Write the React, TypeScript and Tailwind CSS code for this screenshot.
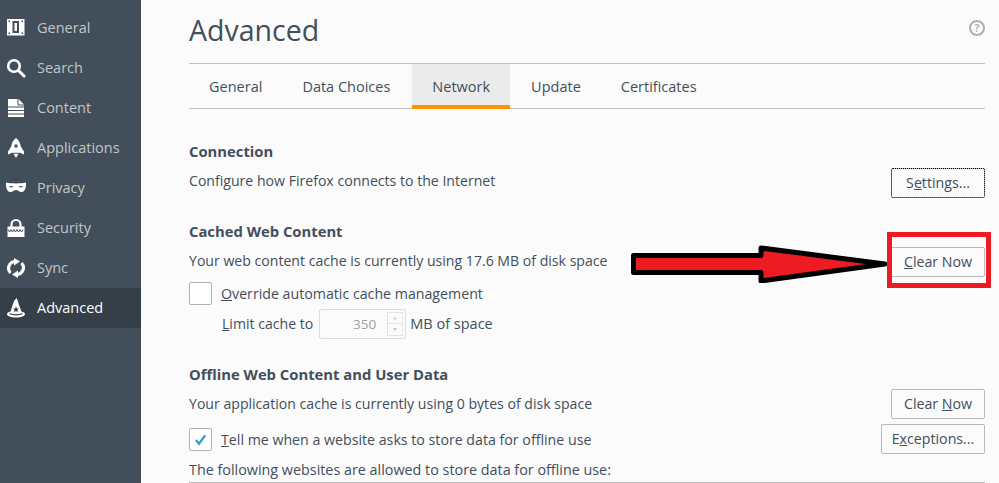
import React from 'react';

const font = { fontFamily: '"Open Sans", "Noto Sans", sans-serif' };

const iconClass = 'w-5 h-5 text-white shrink-0';

function GeneralIcon() {
  return (
    <svg viewBox="0 0 20 20" className={iconClass}>
      <path fill="currentColor" fillRule="evenodd" d="M1 1h17.5v16.5H1zM6.5 3v12h6.5V3zM8.5 5h2.5v8H8.5z" />
      <rect x="2.5" y="2.5" width="1.5" height="1.5" fill="#424f5a" />
      <rect x="15.5" y="2.5" width="1.5" height="1.5" fill="#424f5a" />
      <rect x="2.5" y="14.5" width="1.5" height="1.5" fill="#424f5a" />
      <rect x="15.5" y="14.5" width="1.5" height="1.5" fill="#424f5a" />
    </svg>
  );
}

function SearchIcon() {
  return (
    <svg viewBox="0 0 20 20" className={iconClass}>
      <circle cx="8" cy="8" r="5.8" fill="none" stroke="currentColor" strokeWidth="2.6" />
      <path d="M12.5 12.5L18 18" stroke="currentColor" strokeWidth="3" strokeLinecap="round" />
    </svg>
  );
}

function ContentIcon() {
  return (
    <svg viewBox="0 0 20 20" className={iconClass}>
      <path fill="currentColor" d="M2 1h10.5L18 6.5V19H2z" />
      <path d="M12 1v6h6" fill="none" stroke="#424f5a" strokeWidth="1" />
      <path d="M2 9h16M2 12.5h16M2 16h16" stroke="#424f5a" strokeWidth="1.2" />
    </svg>
  );
}

function RocketIcon() {
  return (
    <svg viewBox="0 0 20 20" className={iconClass}>
      <path fill="currentColor" d="M10 0c2.800 2 4.400 5 4.800 8.500L18 13.500 18 16.500l-4-1.700H6L2 16.500 2 13.500 5.200 8.500C5.600 5 7.200 2 10 0z" />
      <circle cx="10" cy="8" r="1.700" fill="#424f5a" />
      <path fill="currentColor" d="M7.500 15.800h5L10 20z" />
    </svg>
  );
}

function MaskIcon() {
  return (
    <svg viewBox="0 0 20 20" className={iconClass}>
      <path
        fill="currentColor"
        fillRule="evenodd"
        d="M0 4.500c3 1 6.500.500 10 1 3.500-.500 7 0 10-1 .200 4.500-.800 9-4 9.500-2.500.300-4-2-6-2s-3.500 2.300-6 2c-3.200-.500-4.200-5-4-9.500zM3 8.500c1 1.300 3.500 1.300 4.500.300C6 7.800 4.300 7.800 3 8.500zM17 8.500c-1 1.300-3.500 1.300-4.500.300 1.500-1 3.200-1 4.500-.300z"
      />
    </svg>
  );
}

function LockIcon() {
  return (
    <svg viewBox="0 0 20 20" className={iconClass}>
      <path d="M5.500 9V6.500a4.500 4.500 0 0 1 9 0V9" fill="none" stroke="currentColor" strokeWidth="2.200" />
      <path fill="currentColor" d="M1.500 8.500h17V19h-17z" />
      <path d="M2 11.500l1.500 2.500 1.500-2.500 1.500 2.500 1.500-2.500 1.500 2.500 1.500-2.500 1.500 2.500 1.500-2.500 1.500 2.500 1.500-2.500" fill="none" stroke="#424f5a" strokeWidth="1" />
    </svg>
  );
}

function SyncIcon() {
  return (
    <svg viewBox="0 0 20 20" className={iconClass}>
      <path d="M9.500 3.500A6.800 6.800 0 0 0 4.500 15" fill="none" stroke="currentColor" strokeWidth="3.200" />
      <path fill="currentColor" d="M8 0l6 3.500-6 4z" />
      <path d="M10.500 16.500A6.800 6.800 0 0 0 15.500 5" fill="none" stroke="currentColor" strokeWidth="3.200" />
      <path fill="currentColor" d="M12 20l-6-3.500 6-4z" />
    </svg>
  );
}

function WizardIcon() {
  return (
    <svg viewBox="0 0 20 20" className={iconClass}>
      <path fill="currentColor" d="M10.500 0L8 3 4.500 13.500c-2 .500-3.500 1.500-3.500 2.500C1 18 5 19.500 10 19.500S19 18 19 16c0-1-1.500-2-3.500-2.500L12.800 6.500c-.300-2-1.300-4.500-2.300-6.500z" />
      <path d="M3.500 15.500c3.500 1.800 9.500 1.800 13 0" fill="none" stroke="#343f48" strokeWidth="1.200" />
      <path fill="#343f48" d="M10 8.500l.900 2 2.100.200-1.600 1.400.500 2.100-1.900-1.100-1.900 1.100.500-2.100L7 10.700l2.100-.200z" />
    </svg>
  );
}

const nav = [
  { label: 'General', icon: <GeneralIcon /> },
  { label: 'Search', icon: <SearchIcon /> },
  { label: 'Content', icon: <ContentIcon /> },
  { label: 'Applications', icon: <RocketIcon /> },
  { label: 'Privacy', icon: <MaskIcon /> },
  { label: 'Security', icon: <LockIcon /> },
  { label: 'Sync', icon: <SyncIcon /> },
  { label: 'Advanced', icon: <WizardIcon />, active: true },
];

const tabs = ['General', 'Data Choices', 'Network', 'Update', 'Certificates'];

function Btn({ children, className = '' }: { children: React.ReactNode; className?: string }) {
  return (
    <button className={`h-[30px] border border-[#b9b9b9] rounded-[2px] bg-[#fbfbfb] text-[14.2px] text-[#424f5a] ${className}`}>
      {children}
    </button>
  );
}

function Checkbox({ checked }: { checked?: boolean }) {
  return (
    <span className="w-[23px] h-[23px] border border-[#b1b1b1] rounded-[2px] bg-white flex items-center justify-center shrink-0">
      {checked && (
        <svg viewBox="0 0 14 14" className="w-[13px] h-[13px]">
          <path d="M2 7.500L5.500 11.500L12 2.500" fill="none" stroke="#2f9bd3" strokeWidth="2.400" />
        </svg>
      )}
    </span>
  );
}

export default function App() {
  return (
    <div className="w-[999px] h-[483px] flex overflow-hidden bg-[#fbfbfb] text-[14.1px] text-[#424f5a] relative" style={font}>
      <aside className="w-[141px] shrink-0 bg-[#424f5a] pt-2 text-[14.5px]">
        {nav.map((n) => (
          <div key={n.label} className={`h-10 pl-[6px] pb-px flex items-center gap-[11px] ${n.active ? 'bg-[#343f48] text-white' : 'text-[#c1c5c9]'}`}>
            {n.icon}
            <span>{n.label}</span>
          </div>
        ))}
      </aside>

      <main className="flex-1 pl-12 pr-[14px] min-w-0">
        <div className="h-[63px] flex justify-between">
          <h1 className="text-[28.500px] leading-none pt-[16px]">Advanced</h1>
          <span className="mt-[20px] w-4 h-4 rounded-full border-2 border-[#aeaeae] text-[#aeaeae] text-[10px] font-bold flex items-center justify-center">?</span>
        </div>

        <div className="h-[46px] border-y border-[#c1c1c1] flex text-[14.500px]">
          {tabs.map((t) => (
            <div
              key={t}
              className={`flex items-center ${t === 'Network' ? 'pl-5 pr-5 bg-[#ebebeb] border-b-4 border-[#ff9400] pt-1 -mb-px' : 'pt-[2px]'} ${t === 'Data Choices' ? 'pl-5 pr-[22px]' : ''} ${t === 'General' || t === 'Certificates' ? 'pl-5 pr-5' : ''} ${t === 'Update' ? 'pl-[21px] pr-5' : ''}`}
            >
              {t}
            </div>
          ))}
        </div>

        <section className="pt-[32px]">
          <h2 className="font-bold leading-5 text-[14.800px]">Connection</h2>
          <div className="flex items-center justify-between h-[30px] mt-[5px]">
            <p>Configure how Firefox connects to the Internet</p>
            <Btn className="w-[94px] outline-1 outline-dotted outline-black -outline-offset-1 mt-[4px]">
              S<span className="underline">e</span>ttings...
            </Btn>
          </div>
        </section>

        <section className="pt-[25px]">
          <h2 className="font-bold leading-5 text-[14.800px]">Cached Web Content</h2>
          <div className="flex items-center justify-between h-[30px] mt-[5px]">
            <p>Your web content cache is currently using 17.6 MB of disk space</p>
            <Btn className="w-[94px] mt-[2px]">
              <span className="underline">C</span>lear Now
            </Btn>
          </div>
          <div className="flex items-center gap-[9px] h-6 mt-[5px] text-[14.200px]">
            <Checkbox />
            <span className="pt-px"><span className="underline">O</span>verride automatic cache management</span>
          </div>
          <div className="flex items-center h-[30px] ml-[33px] mt-[4px]">
            <span><span className="underline">L</span>imit cache to</span>
            <div className="w-[87px] h-[30px] ml-[6px] border border-[#dcdcdc] rounded-[2px] flex items-center justify-end pr-[2px] text-[#9aa1a7] text-[13.500px]">
              <span className="mr-[11px]">350</span>
              <div className="flex flex-col w-4 h-6 border border-[#e4e4e4] text-[#c4c4c4]">
                <svg viewBox="0 0 14 11" className="h-[11px] border-b border-[#e4e4e4]"><path d="M5 7l2-3 2 3z" fill="currentColor" /></svg>
                <svg viewBox="0 0 14 11" className="h-[11px]"><path d="M5 4l2 3 2-3z" fill="currentColor" /></svg>
              </div>
            </div>
            <span className="ml-[4px] text-[14.500px]">MB of space</span>
          </div>
        </section>

        <section className="pt-[25px]">
          <h2 className="font-bold leading-5 text-[14.800px]">Offline Web Content and User Data</h2>
          <div className="flex items-center justify-between h-[30px] mt-[5px]">
            <p>Your application cache is currently using 0 bytes of disk space</p>
            <Btn className="w-[94px]">
              Clear <span className="underline">N</span>ow
            </Btn>
          </div>
          <div className="flex items-center justify-between h-[30px] mt-[5px]">
            <div className="flex items-center gap-[9px]">
              <Checkbox checked />
              <span className="text-[14.200px] pt-px"><span className="underline">T</span>ell me when a website asks to store data for offline use</span>
            </div>
            <Btn className="w-[104px]">
              E<span className="underline">x</span>ceptions...
            </Btn>
          </div>
          <p className="mt-[6px] leading-5 text-[14.350px]">The following websites are allowed to store data for offline use:</p>
          <div className="mt-[2px] border-t border-[#b9b9b9]" />
        </section>
      </main>

      {/* annotation drawn on top of the screenshot */}
      <svg viewBox="0 0 290 40" className="absolute left-[630px] top-[243px] w-[290px] h-10">
        <path d="M3.500 12.500H131V5L255 21 131 38V29.500H3.500z" fill="#ed1c24" stroke="#000" strokeWidth="5" strokeLinejoin="round" />
      </svg>
      <div className="absolute left-[887px] top-[232px] w-[104px] h-[56px] border-[5px] border-[#ed1c24]" />
    </div>
  );
}
